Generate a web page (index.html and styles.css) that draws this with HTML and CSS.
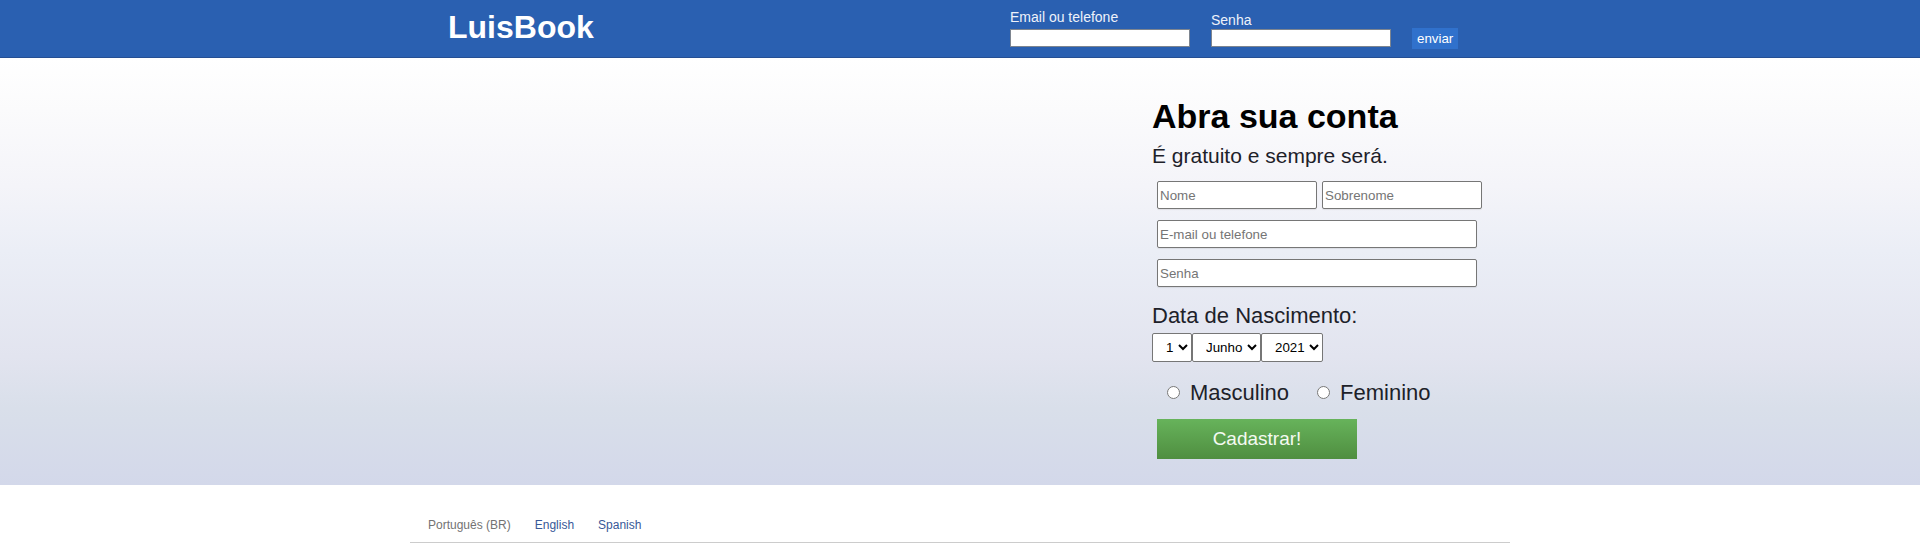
FILE: index.html
```html
<!DOCTYPE html>
<html lang="pt-BR">
<head>
<meta charset="utf-8">
<title>LuisBook</title>
<link rel="stylesheet" href="styles.css">
</head>
<body>
<header class="topbar">
  <div class="topbar-inner">
    <h1 class="logo">LuisBook</h1>
    <form class="login">
      <div class="field field-email">
        <label class="field-label" for="le">Email ou telefone</label>
        <input class="field-input" id="le" type="text">
      </div>
      <div class="field field-pass">
        <label class="field-label" for="lp">Senha</label>
        <input class="field-input" id="lp" type="password">
      </div>
      <button class="login-btn" type="button">enviar</button>
    </form>
  </div>
</header>

<main class="hero">
  <div class="hero-inner">
    <section class="signup">
      <h2 class="signup-title">Abra sua conta</h2>
      <p class="signup-sub">É gratuito e sempre será.</p>
      <div class="row">
        <input class="txt txt-half" type="text" placeholder="Nome">
        <input class="txt txt-half" type="text" placeholder="Sobrenome">
      </div>
      <div class="row">
        <input class="txt txt-full" type="text" placeholder="E-mail ou telefone">
      </div>
      <div class="row">
        <input class="txt txt-full" type="password" placeholder="Senha">
      </div>
      <p class="birth-label">Data de Nascimento:</p>
      <div class="birth">
        <select class="sel"><option>1</option></select>
        <select class="sel"><option>Junho</option></select>
        <select class="sel"><option>2021</option></select>
      </div>
      <div class="gender">
        <label class="radio"><input type="radio" name="g"><span>Masculino</span></label>
        <label class="radio"><input type="radio" name="g"><span>Feminino</span></label>
      </div>
      <button class="submit" type="button">Cadastrar!</button>
    </section>
  </div>
</main>

<footer class="footer">
  <div class="footer-inner">
    <span class="lang lang-current">Português (BR)</span>
    <a class="lang" href="#">English</a>
    <a class="lang" href="#">Spanish</a>
  </div>
</footer>
</body>
</html>
```

FILE: styles.css
```css
html, body {
  margin: 0;
  padding: 0;
  background: #fff;
  font-family: "Liberation Sans", Arial, sans-serif;
}

.topbar {
  background: #2a60b1;
  height: 58px;
  box-sizing: border-box;
  border-bottom: 1px solid #254f93;
}

.topbar-inner {
  width: 1100px;
  margin: 0 auto;
  display: flex;
  align-items: flex-start;
}

.logo {
  margin: 0;
  padding: 9px 0 0 38px;
  font-size: 32px;
  line-height: 37px;
  font-weight: bold;
  color: #fff;
  width: 562px;
}

.login {
  display: flex;
  align-items: flex-start;
  gap: 21px;
  margin: 0;
}

.field {
  display: flex;
  flex-direction: column;
  padding-top: 9px;
}

.field-pass {
  padding-top: 12px;
}

.field-label {
  color: #eef2fa;
  font-size: 14px;
  line-height: 16px;
  margin-bottom: 4px;
}

.field-pass .field-label {
  margin-bottom: 1px;
}

.field-input {
  width: 180px;
  height: 18px;
  box-sizing: border-box;
  border: 1px solid #7d8590;
  background: #fff;
  margin: 0;
  padding: 1px 2px;
}

.login-btn {
  margin-top: 28px;
  height: 21px;
  padding: 0 5px;
  border: none;
  background: #3071cc;
  color: #fff;
  font-family: "Liberation Sans", Arial, sans-serif;
  font-size: 13.33px;
  line-height: 21px;
}

.hero {
  height: 427px;
  background: linear-gradient(to bottom, #ffffff 0%, #fbfbfc 12%, #f4f4f9 30%, #ebeef6 45%, #e2e4ef 70%, #d9dfea 82%, #d3d8ea 100%);
}

.hero-inner {
  width: 1100px;
  margin: 0 auto;
  display: flex;
}

.signup {
  margin-left: 742px;
  padding-top: 39px;
}

.signup-title {
  margin: 0;
  font-size: 34px;
  line-height: 39px;
  font-weight: bold;
  color: #000;
}

.signup-sub {
  margin: 8px 0 13px;
  font-size: 21px;
  line-height: 24px;
  color: #1d2129;
}

.row {
  display: flex;
  gap: 5px;
  margin: 0 0 11px 5px;
}

.txt {
  height: 28px;
  box-sizing: border-box;
  border: 1px solid #767676;
  border-radius: 2px;
  padding: 1px 2px;
  margin: 0;
  background: #fff;
  font-family: "Liberation Sans", Arial, sans-serif;
  font-size: 13.33px;
  box-shadow: 0 1px 1px rgba(0,0,0,0.08);
}

.txt::placeholder {
  color: #757575;
}

.txt-half {
  width: 160px;
}

.txt-full {
  width: 320px;
}

.birth-label {
  margin: 16px 0 5px;
  font-size: 22px;
  line-height: 25px;
  color: #1d2129;
}

.birth {
  display: flex;
  gap: 0;
}

.sel {
  height: 29px;
  box-sizing: border-box;
  border: 1px solid #767676;
  border-radius: 2px;
  background: #fff;
  font-family: "Liberation Sans", Arial, sans-serif;
  font-size: 13.33px;
  color: #000;
  margin: 0;
  padding: 0 1px 0 9px;
}

.gender {
  display: flex;
  align-items: center;
  gap: 28px;
  margin: 18px 0 14px 15px;
}

.radio {
  display: flex;
  align-items: center;
  gap: 10px;
  font-size: 22px;
  line-height: 25px;
  color: #1d2129;
}

.radio input {
  margin: 0;
  width: 13px;
  height: 13px;
}

.submit {
  display: block;
  margin-left: 5px;
  width: 200px;
  height: 40px;
  border: none;
  background: linear-gradient(to bottom, #67b35b 0%, #4f8e40 100%);
  color: #f4faf2;
  font-family: "Liberation Sans", Arial, sans-serif;
  font-size: 19px;
}

.footer-inner {
  width: 1100px;
  margin: 0 auto;
  padding: 33px 0 10px 0;
  border-bottom: 1px solid #cccccc;
  display: flex;
  gap: 24px;
  box-sizing: border-box;
}

.lang {
  font-size: 12px;
  line-height: 14px;
  color: #385898;
  text-decoration: none;
}

.lang-current {
  margin-left: 18px;
  color: #737373;
}
```
